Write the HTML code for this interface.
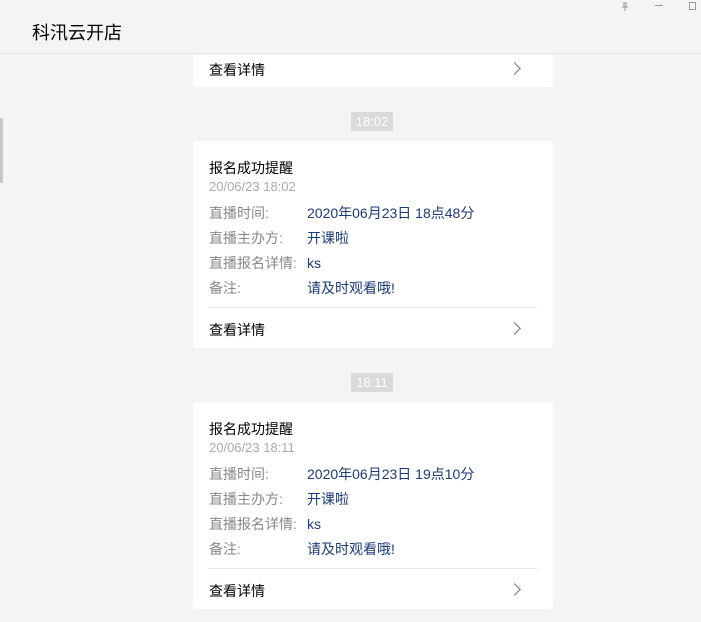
<!DOCTYPE html>
<html><head><meta charset="utf-8"><style>
*{margin:0;padding:0;box-sizing:border-box}
body{width:701px;height:622px;background:#f4f4f4;font-family:"Liberation Sans","Noto Sans CJK SC",sans-serif;position:relative;overflow:hidden}
.hdr{position:absolute;left:0;top:0;width:701px;height:54px;border-bottom:1px solid #e2e2e2}
.hdr .t{position:absolute;left:32px;top:19px;font-size:18px;color:#000}
.card{position:absolute;left:193px;width:360px;background:#fff;border-radius:3px}
.ab{position:absolute;font-size:14px;white-space:nowrap;line-height:16px}
.time{position:absolute;left:351px;width:42px;height:19px;background:#dadada;color:#fff;font-size:13px;text-align:center;line-height:19px;border-radius:2px}
.chev{position:absolute;right:34px;width:9px;height:9px;border-right:1px solid #777;border-top:1px solid #777;transform:rotate(45deg)}
.sb{position:absolute;left:0;top:118px;width:3px;height:65px;background:#c8c8c8}
</style></head><body>
<div class="hdr"><div class="t">科汛云开店</div>
<svg style="position:absolute;left:620px;top:2px" width="10" height="10"><path d="M3 1h4M4 1v4M6 1v4M2 5h6M5 5v4" stroke="#999" fill="none"/></svg>
<div style="position:absolute;left:655px;top:5px;width:8px;height:1px;background:#999"></div>
<div style="position:absolute;left:689px;top:2px;width:7px;height:8px;border:1px solid #999"></div>
</div>
<div class="sb"></div>
<div class="card" style="top:55px;height:32px;border-radius:0 0 3px 3px">
<div class="ab" style="left:16px;top:7px;color:#000">查看详情</div><div class="chev" style="top:9px"></div></div>
<div class="time" style="top:112px">18:02</div>
<div class="card" style="top:141px;height:207px">
<div class="ab" style="left:16px;top:19px;color:#000">报名成功提醒</div>
<div class="ab" style="left:16px;top:38px;color:#aaa;font-size:13px">20/06/23 18:02</div>
<div class="ab" style="left:16px;top:64px;color:#888">直播时间:</div><div class="ab" style="left:114px;top:64px;color:#1d3a7a">2020年06月23日 18点48分</div>
<div class="ab" style="left:16px;top:89px;color:#888">直播主办方:</div><div class="ab" style="left:114px;top:89px;color:#1d3a7a">开课啦</div>
<div class="ab" style="left:16px;top:114px;color:#888">直播报名详情:</div><div class="ab" style="left:114px;top:114px;color:#1d3a7a">ks</div>
<div class="ab" style="left:16px;top:139px;color:#888">备注:</div><div class="ab" style="left:114px;top:139px;color:#1d3a7a">请及时观看哦!</div>
<div style="position:absolute;left:16px;right:16px;top:166px;height:1px;background:#e6e6e6"></div>
<div class="ab" style="left:16px;top:181px;color:#000">查看详情</div><div class="chev" style="top:183px"></div></div>
<div class="time" style="top:373px">18:11</div>
<div class="card" style="top:402px;height:207px">
<div class="ab" style="left:16px;top:19px;color:#000">报名成功提醒</div>
<div class="ab" style="left:16px;top:38px;color:#aaa;font-size:13px">20/06/23 18:11</div>
<div class="ab" style="left:16px;top:64px;color:#888">直播时间:</div><div class="ab" style="left:114px;top:64px;color:#1d3a7a">2020年06月23日 19点10分</div>
<div class="ab" style="left:16px;top:89px;color:#888">直播主办方:</div><div class="ab" style="left:114px;top:89px;color:#1d3a7a">开课啦</div>
<div class="ab" style="left:16px;top:114px;color:#888">直播报名详情:</div><div class="ab" style="left:114px;top:114px;color:#1d3a7a">ks</div>
<div class="ab" style="left:16px;top:139px;color:#888">备注:</div><div class="ab" style="left:114px;top:139px;color:#1d3a7a">请及时观看哦!</div>
<div style="position:absolute;left:16px;right:16px;top:166px;height:1px;background:#e6e6e6"></div>
<div class="ab" style="left:16px;top:181px;color:#000">查看详情</div><div class="chev" style="top:183px"></div></div>
</body></html>
